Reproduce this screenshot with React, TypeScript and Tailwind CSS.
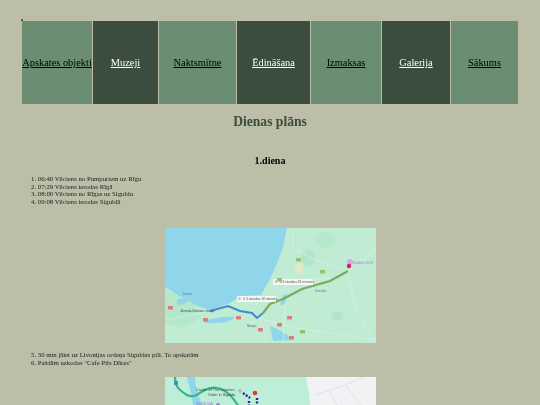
const items = [
  { t: "Apskates objekti", w: "w-[70px]", dark: false },
  { t: "Muzeji", w: "w-[65px]", dark: true },
  { t: "Naktsmītne", w: "w-[77px]", dark: false },
  { t: "Ēdināšana", w: "w-[73px]", dark: true },
  { t: "Izmaksas", w: "w-[70px]", dark: false },
  { t: "Galerija", w: "w-[68px]", dark: true },
  { t: "Sākums", w: "w-[67px]", dark: false },
];

function Shield({ x, y, green }: { x: number; y: number; green?: boolean }) {
  return <rect x={x} y={y} width="5" height="3.4" rx="0.6" fill={green ? "#9cbd6c" : "#dd7b7b"} />;
}

function MapOne() {
  return (
    <svg viewBox="0 0 211 115" className="block w-[211px] h-[115px]">
      <rect width="211" height="115" fill="#bfecd3" />
      <ellipse cx="143" cy="30" rx="7" ry="9" fill="#b2e6c8" />
      <ellipse cx="172" cy="88" rx="6" ry="5" fill="#b2e6c8" />
      <ellipse cx="160" cy="12" rx="10" ry="8" fill="#b6e8cb" />
      <ellipse cx="134" cy="41" rx="4.5" ry="6" fill="#e4e6cc" />
      <path d="M0 62L12 66L28 76L36 90L18 100L0 96Z" fill="#b4e8ca" />
      <path d="M0 0H122L118 19L113 33L105 51L96 67L75 68L65 75L45 82L32 78L15 68L0 59Z" fill="#8fd6ea" />
      <path d="M12 72C16 70 21 70 23 72C21 76 16 78 12 76Z" fill="#8fd6ea" />
      <path d="M38 94C46 90 60 88 70 89C68 94 50 97 38 94Z" fill="#8fd6ea" />
      <path d="M105 98C112 100 122 106 128 112L108 113Z" fill="#8fd6ea" />
      <path d="M115 77L118 67L122 66L120 76Z" fill="#8fd6ea" />
      <path d="M96 92L102 115M92 90L60 115M92 90L130 100L211 112M128 0L128 20L150 32L183 43L211 20M183 43L190 80L211 115M0 92L40 84M104 75L128 52L165 50M120 75L118 115" stroke="#dcefe6" strokeWidth="0.7" fill="none" />
      <path d="M45 83L63 78L75 83L87 85L92 90L98 85" stroke="#4488d0" strokeWidth="2" fill="none" />
      <path d="M98 85L105 76L118 71L137 61L165 53L183 43" stroke="#7ea85e" strokeWidth="2.2" fill="none" />
      <circle cx="185" cy="34" r="3" fill="#d9a6f0" />
      <circle cx="184" cy="38" r="2.2" fill="#d6224e" />
      <rect x="72" y="68" width="39" height="6" rx="1" fill="#f6f6f6" />
      <text x="73.5" y="72.4" fontSize="3.3" fill="#555" fontFamily="Liberation Sans">0 · 0 3 stundas 18 minutes</text>
      <rect x="108" y="51" width="40" height="6" rx="1" fill="#f6f6f6" />
      <text x="110" y="55.4" fontSize="3.3" fill="#555" fontFamily="Liberation Sans">0 · 0 3 stundas 18 minutes</text>
      <text x="15" y="84" fontSize="3.2" fill="#444" fontFamily="Liberation Sans">Jūrmala-Dzintaru stacija</text>
      <text x="188" y="36" fontSize="3.4" fill="#b46ee0" fontFamily="Liberation Sans">Vaidelis 2076</text>
      <text x="18" y="67" fontSize="2.8" fill="#777" fontFamily="Liberation Sans">Ķemeri</text>
      <text x="82" y="99" fontSize="2.8" fill="#666" fontFamily="Liberation Sans">Mārupe</text>
      <text x="150" y="64" fontSize="2.8" fill="#777" fontFamily="Liberation Sans">Krimulda</text>
      <Shield x={3} y={78} />
      <Shield x={38} y={90} />
      <Shield x={71} y={88} />
      <Shield x={93} y={100} />
      <Shield x={112} y={95} />
      <Shield x={122} y={88} />
      <Shield x={124} y={108} />
      <Shield x={112} y={50} green />
      <Shield x={131} y={30} green />
      <Shield x={155} y={42} green />
      <Shield x={135} y={102} green />
    </svg>
  );
}

function MapTwo() {
  return (
    <svg viewBox="0 0 211 115" className="block w-[211px] h-[115px]">
      <rect width="211" height="115" fill="#bdeed8" />
      <path d="M141 0H211V115H141C145 60 148 30 141 0Z" fill="#f1f2f4" />
      <path d="M150 18L180 8L198 0M165 14L178 40M180 8L205 40" stroke="#dcdee2" strokeWidth="0.8" fill="none" />
      <path d="M22 0H30C30 10 34 20 38 30L28 30C28 20 24 10 22 0Z" fill="#8fd6ea" />
      <path d="M10 0C10 8 12 12 22 18C28 21 32 18 38 14C44 11 48 10 52 11C60 12 68 20 74 30" stroke="#3bb489" strokeWidth="2.2" fill="none" />
      <rect x="9" y="4" width="4" height="4" fill="#5a82c8" />
      <circle cx="90" cy="16" r="2.3" fill="#e03a2e" />
      <path d="M78 16L85 21M84 24L84 29M92 21L92 29" stroke="#2a1fa0" strokeWidth="2.4" strokeDasharray="2 1.5" fill="none" />
      <circle cx="75" cy="14" r="1.3" fill="#fff" stroke="#555" strokeWidth="0.5" />
      <text x="31" y="14" fontSize="3.8" fill="#444" fontFamily="Liberation Sans">Castle Of The Livonian</text>
      <text x="43" y="19" fontSize="3.8" fill="#444" fontFamily="Liberation Sans">Order in Sigulda</text>
      <text x="31" y="28" fontSize="3.8" fill="#a070d0" fontFamily="Liberation Sans">SIGULDA</text>
      <circle cx="53" cy="28" r="2" fill="#a070d0" />
    </svg>
  );
}

export default function App() {
  return (
    <div className="h-[405px] overflow-hidden bg-[#bcbea8] font-['Liberation_Serif',serif] text-black blur-[0.35px]">
      <div className="pt-[19px] pl-[21px]">
        <div className="w-[2px] h-[2px] bg-[#555]" />
      </div>
      <nav className="flex ml-[22px] w-[496px] h-[83px] gap-px">
        {items.map((i) => (
          <a
            key={i.t}
            href="#"
            className={`${i.w} shrink-0 flex items-center justify-center whitespace-nowrap text-[10.4px] underline ${i.dark ? "bg-[#3a4d3f] text-white" : "bg-[#6b8e73] text-black"}`}
          >
            {i.t}
          </a>
        ))}
      </nav>
      <h1 className="mt-[9px] text-center text-[13.6px] leading-[17px] font-bold text-[#3a4d3f]">Dienas plāns</h1>
      <h2 className="mt-[24px] text-center text-[10px] leading-[13px] font-bold">1.diena</h2>
      <ol className="mt-[8px] ml-[31px] text-[6.75px] leading-[7.6px] list-none text-[#222]">
        <li>1. 06:40 Vilciens no Pumpuriem uz Rīgu</li>
        <li>2. 07:29 Vilciens ierodas Rīgā</li>
        <li>3. 08:00 Vilciens no Rīgas uz Siguldu</li>
        <li>4. 09:08 Vilciens ierodas Siguldā</li>
      </ol>
      <div className="mt-[23px] flex justify-center">
        <MapOne />
      </div>
      <ol className="mt-[8px] ml-[31px] text-[6.75px] leading-[7.6px] list-none text-[#222]">
        <li>5. 30 min jāiet uz Livonijas ordeņa Siguldas pili. To apskatām</li>
        <li>6. Pašdām uzkodas "Cafe Pils Dārzs"</li>
      </ol>
      <div className="mt-[10px] flex justify-center">
        <MapTwo />
      </div>
    </div>
  );
}
